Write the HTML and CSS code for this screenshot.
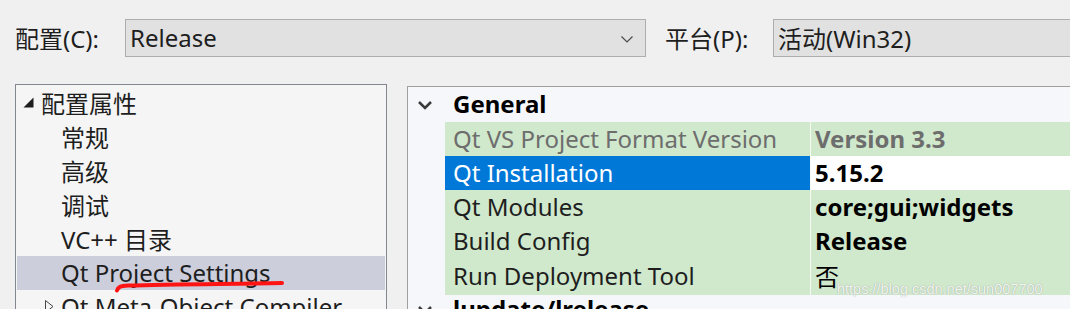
FILE: index.html
```html
<!DOCTYPE html>
<html lang="zh-CN">
<head>
    <meta charset="UTF-8">
    <title>属性页</title>
    <link rel="stylesheet" href="styles.css">
</head>
<body>

    <div class="toolbar">
        <label class="tb-label">配置(C):</label>
        <div class="combo combo-config">
            <span>Release</span>
            <svg class="combo-arrow" width="12" height="7" viewBox="0 0 12 7"><path d="M0.5 0.5 L6 6 L11.5 0.5" fill="none" stroke="#4a4a4a" stroke-width="1.2"/></svg>
        </div>
        <label class="tb-label platform">平台(P):</label>
        <div class="combo combo-platform">
            <span>活动(Win32)</span>
        </div>
    </div>

    <div class="main">
        <div class="tree">
            <div class="tree-row root">
                <svg class="tri" width="11" height="11" viewBox="0 0 11 11"><path d="M10.5 0.5 L10.5 10.5 L0.5 10.5 Z" fill="#1e1e1e"/></svg>
                <span>配置属性</span>
            </div>
            <div class="tree-row child">常规</div>
            <div class="tree-row child">高级</div>
            <div class="tree-row child">调试</div>
            <div class="tree-row child">VC++ 目录</div>
            <div class="tree-row child selected">Qt Project Settings</div>
            <div class="tree-row child collapsed">
                <svg class="tri-open" width="9" height="13" viewBox="0 0 9 13"><path d="M0.5 0.5 L8 6.5 L0.5 12.5 Z" fill="none" stroke="#444" stroke-width="1"/></svg>
                <span>Qt Meta-Object Compiler</span>
            </div>

            <!-- red hand-drawn mark from the screenshot -->
            <svg class="mark" width="180" height="14" viewBox="0 0 180 14">
                <path d="M3 10.5 C4 7 6 6 14 5.5 C60 4 120 4 168 3" fill="none" stroke="#ff1414" stroke-width="4" stroke-linecap="round"/>
            </svg>
        </div>

        <div class="grid">
            <div class="group">
                <svg class="chev" width="16" height="10" viewBox="0 0 16 10"><path d="M2 2 L8 8 L14 2" fill="none" stroke="#3c3c3c" stroke-width="2.6"/></svg>
                <span>General</span>
            </div>
            <div class="prop readonly">
                <div class="name">Qt VS Project Format Version</div>
                <div class="value">Version 3.3</div>
            </div>
            <div class="prop active">
                <div class="name">Qt Installation</div>
                <div class="value">5.15.2</div>
            </div>
            <div class="prop">
                <div class="name">Qt Modules</div>
                <div class="value">core;gui;widgets</div>
            </div>
            <div class="prop">
                <div class="name">Build Config</div>
                <div class="value">Release</div>
            </div>
            <div class="prop">
                <div class="name">Run Deployment Tool</div>
                <div class="value normal">否</div>
            </div>
            <div class="group">
                <svg class="chev" width="16" height="10" viewBox="0 0 16 10"><path d="M2 2 L8 8 L14 2" fill="none" stroke="#3c3c3c" stroke-width="2.6"/></svg>
                <span>lupdate/lrelease</span>
            </div>

            <div class="watermark">https://blog.csdn.net/sun007700</div>
        </div>
    </div>

</body>
</html>
```

FILE: styles.css
```css
body {
    margin: 0;
    background-color: #f0f0f0;
    font-family: "Noto Sans", "Noto Sans CJK SC", sans-serif;
    font-size: 24px;
    color: #1e1e1e;
    overflow: hidden;
    height: 309px;
}
.toolbar {
    display: flex;
    align-items: center;
    padding: 19px 0 0 15px;
    height: 38px;
}
.tb-label {
    width: 110px;
    flex-shrink: 0;
    white-space: nowrap;
    padding-bottom: 2px;
}
.tb-label.platform {
    width: 108px;
    margin-left: 19px;
}
.combo {
    height: 36px;
    border: 1px solid #adadad;
    background-color: #e1e1e1;
    display: flex;
    align-items: center;
    padding-left: 4px;
    box-sizing: content-box;
    flex-shrink: 0;
}
.combo span {
    padding-bottom: 2px;
}
.combo-config {
    width: 515px;
    position: relative;
}
.combo-arrow {
    position: absolute;
    right: 12px;
    top: 16px;
}
.combo-platform {
    width: 400px;
}
.main {
    display: flex;
    align-items: flex-start;
    margin-top: 27px;
    padding-left: 15px;
}
.tree {
    position: relative;
    width: 370px;
    height: 240px;
    flex-shrink: 0;
    border: 1px solid #828790;
    border-bottom: none;
    background-color: #f5f5f5;
    padding-top: 1px;
}
.tree-row {
    height: 34px;
    display: flex;
    align-items: center;
    white-space: nowrap;
    margin: 0 1px;
    padding-bottom: 2px;
    box-sizing: border-box;
}
.tree-row.root {
    padding-left: 6px;
}
.tree-row.root .tri {
    margin-right: 7px;
}
.tree-row.child {
    padding-left: 44px;
}
.tree-row.selected {
    background-color: #cccedb;
}
.tree-row.collapsed {
    padding-left: 28px;
}
.tri-open {
    margin-right: 7px;
}
.mark {
    position: absolute;
    left: 98px;
    top: 195px;
}
.grid {
    position: relative;
    margin-left: 20px;
    margin-top: 2px;
    flex: 1;
    height: 240px;
    border-top: 1px solid #a0a0a0;
    border-left: 1px solid #a0a0a0;
    background-color: #f5f7fb;
}
.group {
    height: 35px;
    display: flex;
    align-items: center;
    font-weight: bold;
    color: #000;
    padding-left: 9px;
    padding-bottom: 2px;
    box-sizing: border-box;
}
.chev {
    margin-right: 20px;
    margin-top: 2px;
}
.prop {
    display: grid;
    grid-template-columns: 365px 1fr;
    column-gap: 1px;
    margin-left: 37px;
    margin-bottom: 1px;
    height: 33px;
    background-color: #f4faf2;
}
.prop .name,
.prop .value {
    background-color: #d0e8cc;
    display: flex;
    align-items: center;
    white-space: nowrap;
    padding-bottom: 2px;
}
.prop .name {
    padding-left: 8px;
}
.prop .value {
    padding-left: 4px;
    font-weight: bold;
    color: #000;
}
.prop .value.normal {
    font-weight: normal;
}
.prop.readonly .name,
.prop.readonly .value {
    color: #6d6d6d;
}
.prop.active .name {
    background-color: #0078d7;
    color: #fff;
}
.prop.active .value {
    background-color: #fff;
}
.watermark {
    position: absolute;
    left: 429px;
    top: 194px;
    font-family: "Liberation Sans", sans-serif;
    font-size: 14.5px;
    color: rgba(255, 255, 255, 0.9);
    text-shadow: 0 0 1px rgba(90, 90, 90, 0.6);
    white-space: nowrap;
}
```
